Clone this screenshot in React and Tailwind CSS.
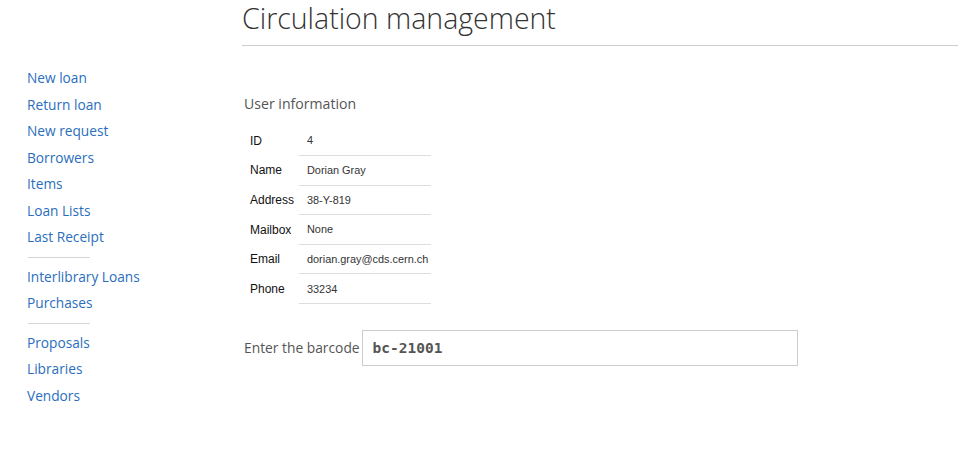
import React from "react";

const groups = [
  ["New loan", "Return loan", "New request", "Borrowers", "Items", "Loan Lists", "Last Receipt"],
  ["Interlibrary Loans", "Purchases"],
  ["Proposals", "Libraries", "Vendors"],
];

const rows = [
  ["ID", "4"],
  ["Name", "Dorian Gray"],
  ["Address", "38-Y-819"],
  ["Mailbox", "None"],
  ["Email", "dorian.gray@cds.cern.ch"],
  ["Phone", "33234"],
];

export default function App() {
  return (
    <div className="flex w-[975px] h-[454px] bg-white overflow-hidden" style={{ fontFamily: '"Open Sans", sans-serif' }}>
      <aside className="w-[242px] shrink-0 pl-[27px] pt-[65px]">
        {groups.map((g, gi) => (
          <div key={gi}>
            {gi > 0 && <div className="w-[62px] h-px bg-[#d6d6d6] my-[6px] ml-px" />}
            <ul>
              {g.map((t) => (
                <li key={t} className="text-[13.7px] leading-[26.5px] text-[#2a6ebd]">
                  <a href="#">{t}</a>
                </li>
              ))}
            </ul>
          </div>
        ))}
      </aside>
      <main className="flex-1 pr-[17px]">
        <h1 className="text-[28.5px] font-light leading-[36px] pt-0 pb-[9px] border-b border-[#cccccc] text-[#333]">
          Circulation management
        </h1>
        <div className="pl-[2px]">
          <h2 className="mt-[48px] text-[14.1px] leading-[20px] text-[#555]">User information</h2>
          <table className="mt-[12px] border-collapse" style={{ fontFamily: '"Liberation Sans", Arial, sans-serif' }}>
            <tbody>
              {rows.map(([k, v]) => (
                <tr key={k} className="h-[29.6px]">
                  <th className="w-[55px] pl-[6px] text-left font-normal text-[12px] text-[#111] align-middle">{k}</th>
                  <td className="w-[132px] pl-[8px] text-[10.9px] text-[#333] border-b border-[#dddddd] align-middle">{v}</td>
                </tr>
              ))}
            </tbody>
          </table>
          <div className="mt-[26px] flex items-center">
            <label className="text-[13.8px] text-[#555] mr-[2px]">Enter the barcode</label>
            <input
              defaultValue="bc-21001"
              className="w-[436px] h-[36px] border border-[#cccccc] px-[10px] text-[14.5px] font-bold text-[#555] outline-none"
              style={{ fontFamily: '"DejaVu Sans Mono", monospace' }}
            />
          </div>
        </div>
      </main>
    </div>
  );
}
